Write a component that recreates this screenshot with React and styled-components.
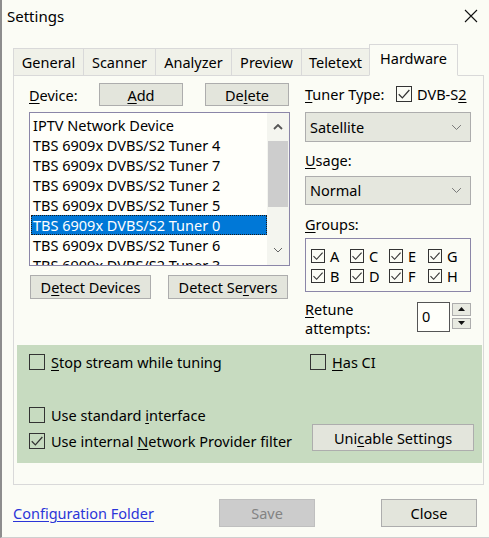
import React from 'react';
import styled, { createGlobalStyle } from 'styled-components';

const GlobalStyle = createGlobalStyle`
  html, body {
    margin: 0;
    padding: 0;
    background: #fbfcf5;
  }
  body {
    font-family: "Noto Sans", "Segoe UI", sans-serif;
    font-size: 14px;
    color: #000;
  }
  * { box-sizing: border-box; }
  u { text-decoration-thickness: 1px; text-underline-offset: 2px; }
`;

const Window = styled.div`
  width: 489px;
  height: 538px;
  display: flex;
  flex-direction: column;
  border-left: 2px solid #8d8d8d;
  border-bottom: 1px solid #cfcfcf;
  background: #fbfcf5;
  overflow: hidden;
`;

const TitleBar = styled.div`
  height: 34px;
  flex: 0 0 34px;
  display: flex;
  align-items: center;
  justify-content: space-between;
  padding: 0 11px 2px 5px;
  font-size: 15px;
`;

const Body = styled.div`
  padding: 10px 3px 0 11px;
`;

const TabStrip = styled.div`
  display: flex;
  align-items: flex-end;
  height: 32px;
  margin-bottom: -1px;
  position: relative;
  z-index: 1;
`;

const Tab = styled.div`
  width: ${p => p.$w}px;
  height: ${p => (p.$active ? 32 : 28)}px;
  display: flex;
  align-items: center;
  justify-content: center;
  padding-bottom: ${p => (p.$active ? 4 : 0)}px;
  background: ${p => (p.$active ? '#fbfcf5' : '#f0f1e9')};
  border: 1px solid #d9d9d9;
  border-bottom: ${p => (p.$active ? '1px solid #fbfcf5' : '1px solid #d9d9d9')};
  margin-left: ${p => (p.$first ? 0 : -1)}px;
  font-size: 14.5px;
`;

const Panel = styled.div`
  width: 471px;
  height: 410px;
  border: 1px solid #d9d9d9;
  background: #fbfcf5;
  padding: 7px 2px 0 3px;
`;

const Columns = styled.div`
  display: flex;
  gap: 15px;
  padding-left: 12px;
  height: 255px;
`;

const LeftCol = styled.div`
  width: 261px;
  display: flex;
  flex-direction: column;
`;

const RightCol = styled.div`
  width: 166px;
  display: flex;
  flex-direction: column;
`;

const Row = styled.div`
  display: flex;
  align-items: center;
  height: ${p => p.$h || 23}px;
  gap: ${p => p.$gap || 0}px;
`;

const Label = styled.div`
  width: ${p => (p.$w ? `${p.$w}px` : 'auto')};
  font-size: 14.5px;
  line-height: 20px;
`;

const Button = styled.div`
  width: ${p => p.$w}px;
  height: ${p => p.$h || 24}px;
  display: flex;
  align-items: center;
  justify-content: center;
  background: ${p => (p.$disabled ? '#cccccc' : '#e3e5dc')};
  border: 1px solid ${p => (p.$disabled ? '#bfbfbf' : '#adadad')};
  color: ${p => (p.$disabled ? '#838383' : '#000')};
  margin-left: ${p => p.$ml || 0}px;
  font-size: 14.5px;
`;

const ListBox = styled.div`
  margin-top: 6px;
  height: 154px;
  border: 1px solid #8b86a8;
  background: #fffffa;
  display: flex;
  overflow: hidden;
`;

const ListItems = styled.div`
  flex: 1;
  padding-top: 2px;
  overflow: hidden;
`;

const ListItem = styled.div`
  height: 20px;
  line-height: 19px;
  padding-left: 1px;
  margin-left: 1px;
  white-space: nowrap;
  font-size: 14.5px;
  background: ${p => (p.$selected ? '#0078d7' : 'transparent')};
  color: ${p => (p.$selected ? '#fff' : '#000')};
  border: 1px ${p => (p.$selected ? 'dotted #1a1a1a' : 'solid transparent')};
`;

const ScrollBar = styled.div`
  width: 22px;
  background: #f4f5ef;
  display: flex;
  flex-direction: column;
  align-items: center;
`;

const ScrollArrow = styled.div`
  height: ${p => p.$h}px;
  width: 100%;
  display: flex;
  align-items: center;
  justify-content: center;
`;

const ScrollThumb = styled.div`
  width: 20px;
  height: 66px;
  background: #cdcdcd;
`;

const ScrollTrack = styled.div`
  flex: 1;
`;

const ButtonRow = styled.div`
  margin-top: 9px;
  display: flex;
  padding-left: 1px;
`;

const Combo = styled.div`
  height: 30px;
  margin-top: ${p => p.$mt || 0}px;
  border: 1px solid #adadad;
  background: #e5e7de;
  display: flex;
  align-items: center;
  justify-content: space-between;
  padding: 0 8px 0 4px;
  font-size: 14.5px;
`;

const FieldLabel = styled.div`
  height: ${p => p.$h}px;
  display: flex;
  align-items: center;
  padding-top: ${p => p.$pt || 0}px;
  font-size: 14.5px;
`;

const GroupsBox = styled.div`
  height: 54px;
  border: 1px solid #8b86a8;
  display: grid;
  grid-template-columns: repeat(4, 39px);
  grid-auto-rows: 20px;
  padding: 7px 0 0 5px;
`;

const CheckItem = styled.label`
  display: flex;
  align-items: center;
  gap: ${p => p.$gap || 6}px;
  font-size: 14.5px;
  white-space: nowrap;
  line-height: 18px;
`;

const Box = styled.span`
  width: ${p => p.$size}px;
  height: ${p => p.$size}px;
  flex: 0 0 ${p => p.$size}px;
  border: 1px solid ${p => p.$color || '#333'};
  background: ${p => p.$bg || 'transparent'};
  display: flex;
  align-items: center;
  justify-content: center;
`;

const RetuneRow = styled.div`
  margin-top: 10px;
  display: flex;
  align-items: flex-start;
`;

const RetuneLabel = styled.div`
  width: 112px;
  line-height: 19px;
  margin-top: -2px;
  font-size: 14.5px;
`;

const SpinInput = styled.div`
  width: 33px;
  height: 30px;
  border: 1px solid #555;
  background: #fffffa;
  padding-left: 4px;
  line-height: 26px;
  font-size: 14.5px;
`;

const SpinButtons = styled.div`
  margin-left: 2px;
  margin-top: 1px;
  display: flex;
  flex-direction: column;
  gap: 2px;
`;

const SpinButton = styled.div`
  width: 19px;
  height: ${p => p.$h}px;
  border: 1px solid #adadad;
  background: #e8eae1;
  display: flex;
  align-items: center;
  justify-content: center;
`;

const GreenArea = styled.div`
  margin-top: 7px;
  width: 465px;
  height: 118px;
  background: #c7dbc0;
  display: grid;
  grid-template-columns: 281px 1fr;
  grid-template-rows: 16px 36px 18px 27px;
  grid-template-areas:
    "stop ci"
    ". ."
    "std ."
    "net btn";
  padding: 9px 0 0 12px;
`;

const Cell = styled.div`
  grid-area: ${p => p.$area};
  display: flex;
  align-items: ${p => p.$align || 'center'};
  padding-bottom: ${p => p.$pb || 0}px;
`;

const Footer = styled.div`
  display: flex;
  align-items: center;
  padding: 14px 0 0 0;
`;

const Link = styled.a`
  flex: 0 0 206px;
  color: #2b35d8;
  text-decoration: underline;
  text-underline-offset: 2px;
  font-size: 14.5px;
  cursor: pointer;
`;

const Check = ({ size = 13 }) => (
  <svg width={size - 2} height={size - 2} viewBox="0 0 12 12">
    <polyline points="1.5,6.2 4.6,9.3 10.6,2.6" fill="none" stroke="#333" strokeWidth="1.1" />
  </svg>
);

const CheckBox = ({ checked, size = 15, gap, children }) => (
  <CheckItem $gap={gap}>
    <Box $size={size}>{checked && <Check size={size} />}</Box>
    <span>{children}</span>
  </CheckItem>
);

const Chevron = ({ dir = 'down', w = 11, color = '#777' }) => (
  <svg width={w} height={w * 0.6} viewBox="0 0 10 6">
    <polyline
      points={dir === 'down' ? '1,1 5,5 9,1' : '1,5 5,1 9,5'}
      fill="none"
      stroke={color}
      strokeWidth={dir === 'down' ? 0.9 : 1.8}
    />
  </svg>
);

const Triangle = ({ up }) => (
  <svg width="7" height="4" viewBox="0 0 7 4">
    <polygon points={up ? '0,4 3.5,0 7,4' : '0,0 3.5,4 7,0'} fill="#111" />
  </svg>
);

const tabs = [
  ['General', 71],
  ['Scanner', 73],
  ['Analyzer', 77],
  ['Preview', 71],
  ['Teletext', 69],
  ['Hardware', 89],
];

const devices = [
  'IPTV Network Device',
  'TBS 6909x DVBS/S2 Tuner 4',
  'TBS 6909x DVBS/S2 Tuner 7',
  'TBS 6909x DVBS/S2 Tuner 2',
  'TBS 6909x DVBS/S2 Tuner 5',
  'TBS 6909x DVBS/S2 Tuner 0',
  'TBS 6909x DVBS/S2 Tuner 6',
  'TBS 6909x DVBS/S2 Tuner 3',
];

const groups = ['A', 'C', 'E', 'G', 'B', 'D', 'F', 'H'];

const App = () => {
  return (
    <Window>
      <GlobalStyle />
      <TitleBar>
        <span>Settings</span>
        <svg width="14" height="14" viewBox="0 0 14 14">
          <path d="M1 1 L13 13 M13 1 L1 13" stroke="#111" strokeWidth="1.1" />
        </svg>
      </TitleBar>
      <Body>
        <TabStrip>
          {tabs.map(([name, w], i) => (
            <Tab key={name} $w={w} $first={i === 0} $active={name === 'Hardware'}>
              {name}
            </Tab>
          ))}
        </TabStrip>
        <Panel>
          <Columns>
            <LeftCol>
              <Row>
                <Label $w={70}><u>D</u>evice:</Label>
                <Button $w={84} $h={23}><u>A</u>dd</Button>
                <Button $w={84} $h={23} $ml={22}>De<u>l</u>ete</Button>
              </Row>
              <ListBox>
                <ListItems>
                  {devices.map((d, i) => (
                    <ListItem key={d} $selected={i === 5}>{d}</ListItem>
                  ))}
                </ListItems>
                <ScrollBar>
                  <ScrollArrow $h={28}><Chevron dir="up" w={10} color="#555" /></ScrollArrow>
                  <ScrollThumb />
                  <ScrollTrack />
                  <ScrollArrow $h={30}><Chevron dir="down" w={10} color="#555" /></ScrollArrow>
                </ScrollBar>
              </ListBox>
              <ButtonRow>
                <Button $w={121}>D<u>e</u>tect Devices</Button>
                <Button $w={120} $ml={17}>Detect Se<u>r</u>vers</Button>
              </ButtonRow>
            </LeftCol>
            <RightCol>
              <Row>
                <Label $w={91}><u>T</u>uner Type:</Label>
                <CheckBox checked size={16} gap={5}>DVB-S<u>2</u></CheckBox>
              </Row>
              <Combo $mt={6}>
                <span>Satellite</span>
                <Chevron />
              </Combo>
              <FieldLabel $h={34} $pt={2}><u>U</u>sage:</FieldLabel>
              <Combo>
                <span>Normal</span>
                <Chevron />
              </Combo>
              <FieldLabel $h={33} $pt={4}><u>G</u>roups:</FieldLabel>
              <GroupsBox>
                {groups.map(g => (
                  <CheckBox key={g} checked size={14} gap={5}>{g}</CheckBox>
                ))}
              </GroupsBox>
              <RetuneRow>
                <RetuneLabel><u>R</u>etune<br />attempts:</RetuneLabel>
                <SpinInput>0</SpinInput>
                <SpinButtons>
                  <SpinButton $h={13}><Triangle up /></SpinButton>
                  <SpinButton $h={11}><Triangle /></SpinButton>
                </SpinButtons>
              </RetuneRow>
            </RightCol>
          </Columns>
          <GreenArea>
            <Cell $area="stop">
              <CheckBox size={16}><u>S</u>top stream while tuning</CheckBox>
            </Cell>
            <Cell $area="ci">
              <CheckBox size={16}><u>H</u>as CI</CheckBox>
            </Cell>
            <Cell $area="std">
              <CheckBox size={16}>Use standard <u>i</u>nterface</CheckBox>
            </Cell>
            <Cell $area="net" $align="flex-end" $pb={1}>
              <CheckBox checked size={16}>Use internal <u>N</u>etwork Provider filter</CheckBox>
            </Cell>
            <Cell $area="btn">
              <Button $w={162} $h={27} $ml={2}>Uni<u>c</u>able Settings</Button>
            </Cell>
          </GreenArea>
        </Panel>
        <Footer>
          <Link>Configuration Folder</Link>
          <Button $w={96} $h={28} $disabled>Save</Button>
          <Button $w={96} $h={28} $ml={66}>Close</Button>
        </Footer>
      </Body>
    </Window>
  );
};

export default App;
